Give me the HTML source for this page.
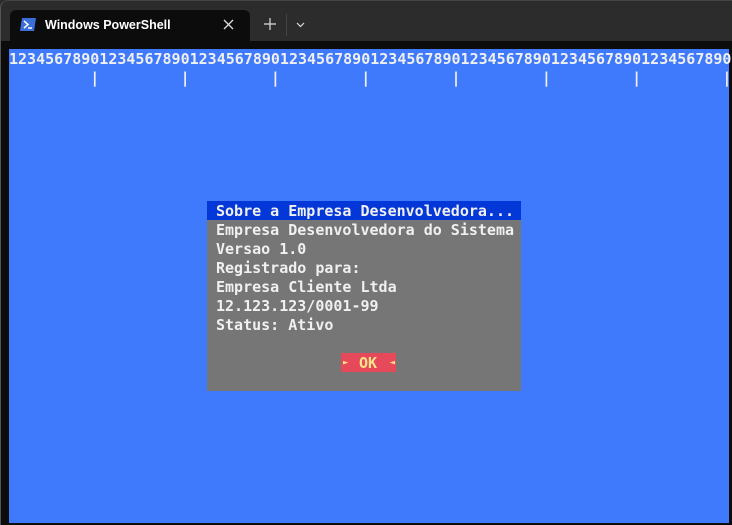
<!DOCTYPE html>
<html><head><meta charset="utf-8"><style>
body{margin:0;width:732px;height:525px;background:#2c2c2c;position:relative;overflow:hidden;font-family:"Liberation Sans",sans-serif}
.win{position:absolute;left:0;top:0;width:732px;height:525px;border-left:1px solid #555;border-top:1px solid #444;box-sizing:border-box;border-radius:8px 0 0 0}
.tab{position:absolute;left:10px;top:10px;width:240px;height:31px;background:#0c0c0c;border-radius:6px 6px 0 0}
.body{position:absolute;left:1px;top:41px;width:731px;height:484px;background:#0c0c0c}
.term{position:absolute;left:9px;top:49px;width:720px;height:474px;background:#3f79fc}
.mono{font-family:"DejaVu Sans Mono","Liberation Mono",monospace;font-weight:bold;font-size:15px;line-height:19px;color:#f0f0f0;white-space:pre;letter-spacing:0}
.ttl{position:absolute;left:45px;top:18px;color:#fff;font-size:12.5px;font-weight:bold}
.dlg{position:absolute;left:207px;top:201px;width:314px;height:190px;background:#767676}
.hd{position:absolute;left:0;top:0;width:314px;height:19px;background:#0437d8}
.ok{position:absolute;left:341px;top:353px;width:55px;height:19px;background:#e64a5a;color:#fde58a}
.t{position:relative;top:1px}
</style></head><body>
<div class="win"></div>
<div class="tab"></div>
<svg style="position:absolute;left:20px;top:18px" width="16" height="13"><path d="M2 0H16L14 13H0Z" fill="#3a6ed8"/><path d="M4 3L8 6.5L4 10" stroke="#fff" stroke-width="1.5" fill="none"/><path d="M8 10H12" stroke="#fff" stroke-width="1.5"/></svg>
<div class="ttl">Windows PowerShell</div>
<svg style="position:absolute;left:223px;top:19px" width="11" height="11"><path d="M1 1L10 10M10 1L1 10" stroke="#ddd" stroke-width="1.3"/></svg>
<svg style="position:absolute;left:264px;top:18px" width="12" height="12"><path d="M6 0V12M0 6H12" stroke="#ddd" stroke-width="1.2"/></svg>
<div style="position:absolute;left:286px;top:14px;width:1px;height:22px;background:#444"></div>
<svg style="position:absolute;left:296px;top:22px" width="9" height="6"><path d="M1 1L4.5 4.5L8 1" stroke="#ddd" stroke-width="1.2" fill="none"/></svg>
<div class="body"></div>
<div class="term mono"><div class="t">12345678901234567890123456789012345678901234567890123456789012345678901234567890
         |         |         |         |         |         |         |         |</div></div>
<div class="dlg mono"><div class="hd"></div><div style="position:absolute;left:9px;top:1px">Sobre a Empresa Desenvolvedora...
Empresa Desenvolvedora do Sistema
Versao 1.0
Registrado para:
Empresa Cliente Ltda
12.123.123/0001-99
Status: Ativo</div></div>
<div class="ok mono" style="color:#fde58a"><span style="font-size:9px;position:absolute;left:2px;top:1px">►</span><span style="position:absolute;left:18px;top:1px">OK</span><span style="font-size:9px;position:absolute;right:1px;top:1px">◄</span></div>
</body></html>
